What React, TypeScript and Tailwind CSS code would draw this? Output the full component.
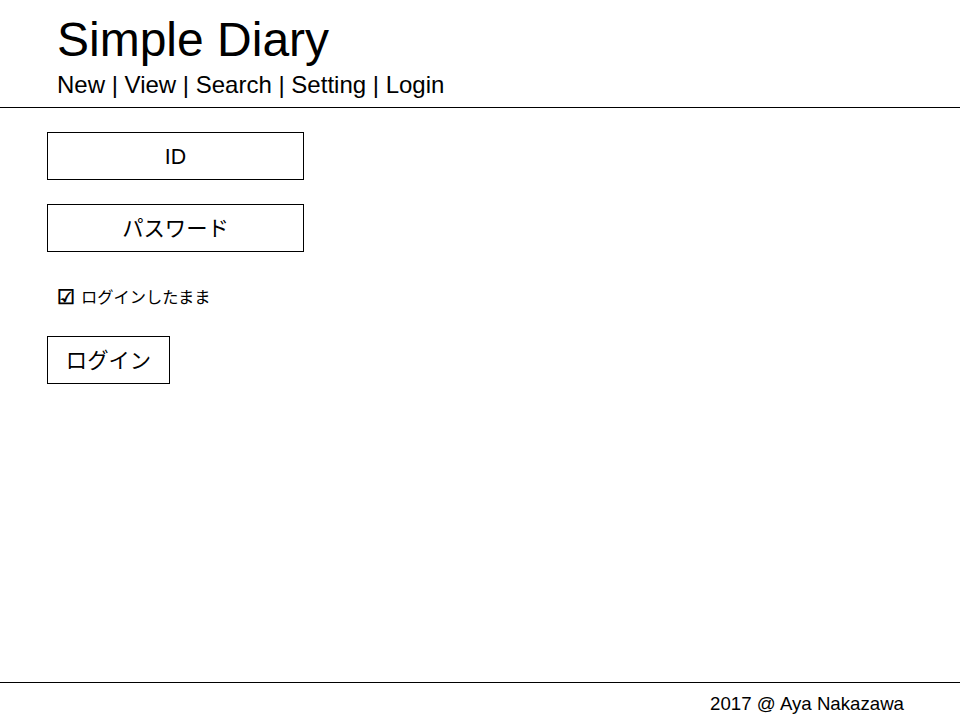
import React from 'react';

const font = { fontFamily: '"Liberation Sans", "Noto Sans CJK JP", sans-serif' };

const Box = ({ label, className = '' }: { label: string; className?: string }) => (
  <div className={`h-[48px] border border-black flex items-center justify-center pt-[4px] text-[21.33px] leading-none text-black ${className}`}>
    {label}
  </div>
);

export default function App() {
  return (
    <div style={font} className="w-[960px] h-[720px] bg-white text-black flex flex-col">
      {/* Header */}
      <header className="h-[108px] border-b border-black pl-[57px]">
        <h1 className="pt-[16px] text-[48px] leading-[48px] font-normal">Simple Diary</h1>
        <nav className="mt-[9px] text-[24px] leading-[24px]">
          New | View | Search | Setting | Login
        </nav>
      </header>

      {/* Login form */}
      <main className="flex-1 pl-[47px] pt-[24px]">
        <Box label="ID" className="w-[257px]" />
        <Box label="パスワード" className="w-[257px] mt-[24px]" />

        <label className="mt-[33px] h-[24px] pl-[10px] flex items-center gap-[6px] text-[16.25px] leading-none">
          <span className="text-[20px] leading-none font-bold">☑</span>
          <span>ログインしたまま</span>
        </label>

        <Box label="ログイン" className="w-[123px] mt-[27px]" />
      </main>

      {/* Footer */}
      <footer className="h-[38px] border-t border-black flex items-center justify-end pr-[56px] pt-[5px] text-[18.67px] leading-none">
        2017 @ Aya Nakazawa
      </footer>
    </div>
  );
}
